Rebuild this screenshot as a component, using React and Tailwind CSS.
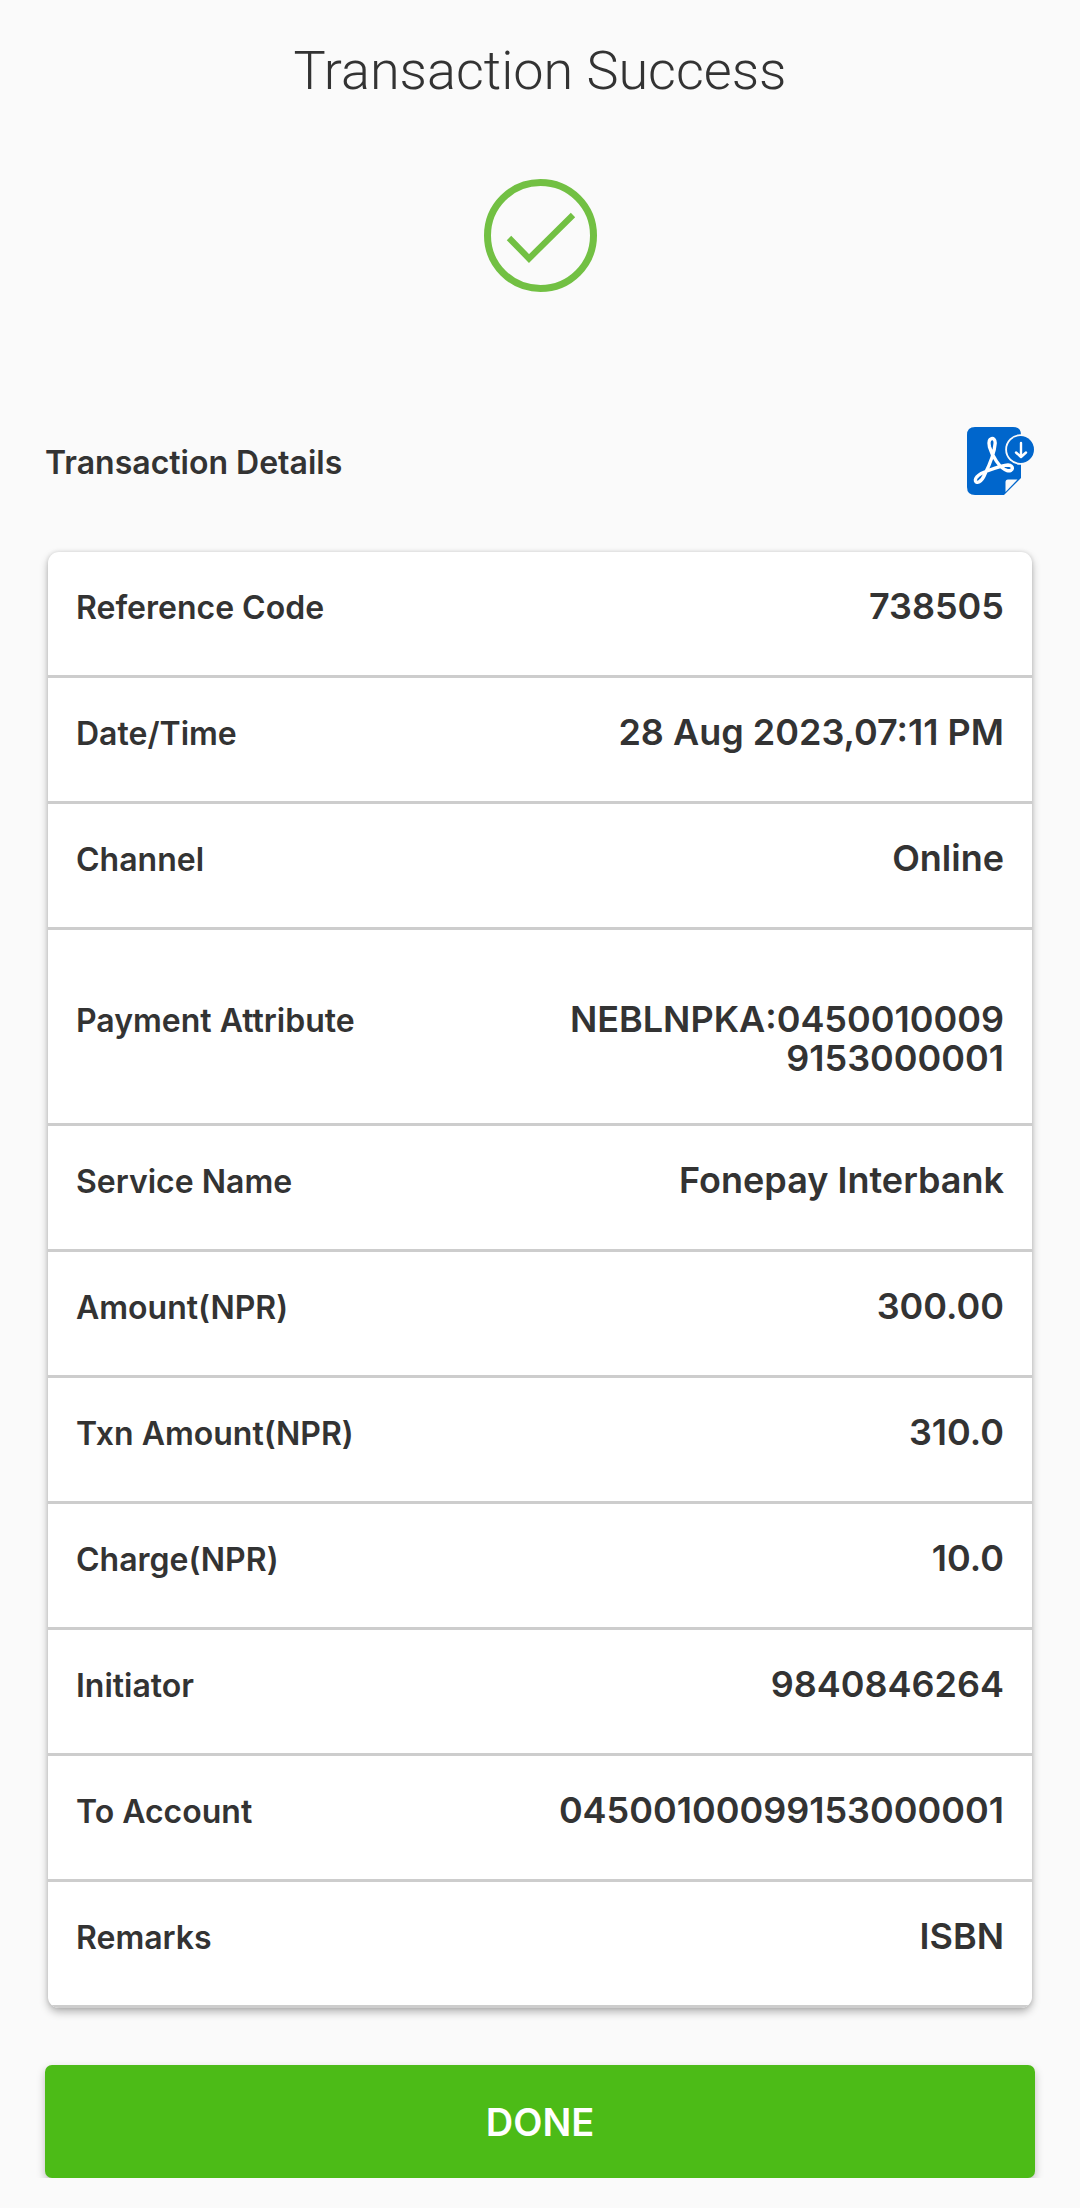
const details = [
  { label: 'Reference Code', value: '738505' },
  { label: 'Date/Time', value: '28 Aug 2023,07:11 PM' },
  { label: 'Channel', value: 'Online' },
  { label: 'Payment Attribute', value: 'NEBLNPKA:04500100099153000001', tall: true },
  { label: 'Service Name', value: 'Fonepay Interbank' },
  { label: 'Amount(NPR)', value: '300.00' },
  { label: 'Txn Amount(NPR)', value: '310.0' },
  { label: 'Charge(NPR)', value: '10.0' },
  { label: 'Initiator', value: '9840846264' },
  { label: 'To Account', value: '04500100099153000001' },
  { label: 'Remarks', value: 'ISBN' },
]

function SuccessIcon() {
  return (
    <svg viewBox="0 0 113 113" className="w-[113px] h-[113px]" fill="none" stroke="#72c043" aria-hidden="true">
      <circle cx="56.5" cy="56.5" r="53" strokeWidth="7" />
      <path d="M25 59 L45 79.5 L89 36" strokeWidth="6.2" />
    </svg>
  )
}

function PdfIcon() {
  return (
    <svg viewBox="0 0 68 68" className="w-[68px] h-[68px]" aria-hidden="true">
      <path d="M8 0H46Q54 0 54 8V51L37 68H8Q0 68 0 60V8Q0 0 8 0Z" fill="#0066cc" />
      <path d="M38.5 65V55Q38.5 52.5 41 52.5H50.5Z" fill="#fafafa" />
      {/* acrobat swirl */}
      <path
        d="M22.5 20C20 9.5 28.5 9.5 28.2 16C27.5 26 22.5 38 17.5 48C14.5 55 9.5 57 8.5 54C7.5 50 14 46 20 44C28 41 36 38 41 38C47.5 38.5 46.5 45 40 43.5C33 41.5 25 29 22.5 20Z"
        fill="none" stroke="#fff" strokeWidth="3.4" strokeLinejoin="round"
      />
      <circle cx="53.5" cy="22.5" r="15.3" fill="#fafafa" />
      <circle cx="53.5" cy="22.5" r="13.5" fill="#0066cc" />
      <path d="M54 16V29.5M49 25.5L54 30L59 25.5" fill="none" stroke="#fff" strokeWidth="2.4" strokeLinecap="round" strokeLinejoin="round" />
    </svg>
  )
}

function DetailRow({ label, value, tall }) {
  return (
    <div className={`flex items-baseline justify-between gap-6 px-7 border-b-3 border-[#cdcdcd] ${tall ? 'pt-[70px] pb-[45px]' : 'pt-[35px] pb-[49px]'}`}>
      <dt className="text-[32px] leading-[34px]">{label}</dt>
      <dd className="max-w-[452px] text-right text-[36px] leading-[39px] break-all">{value}</dd>
    </div>
  )
}

export default function App() {
  return (
    <div className="min-h-screen bg-[#fafafa] text-[#333333] font-semibold font-['Inter','Liberation_Sans',sans-serif]">
      <main className="flex flex-col px-[45px] pt-[39px] pb-[30px]">
        <h1 className="text-center text-[54px] leading-[64px] font-light font-['Roboto','Liberation_Sans',sans-serif]">
          Transaction Success
        </h1>
        <div className="flex justify-center mt-[76px]">
          <SuccessIcon />
        </div>

        <div className="flex items-center justify-between mt-[135px]">
          <h2 className="pt-1 text-[32px] leading-[40px]">Transaction Details</h2>
          <button type="button" aria-label="Download PDF" className="cursor-pointer">
            <PdfIcon />
          </button>
        </div>

        <dl className="mt-[57px] mx-[3px] bg-white rounded-[11px] overflow-hidden shadow-[0_4px_8px_rgba(0,0,0,0.28),0_0_4px_rgba(0,0,0,0.12)]">
          {details.map((item) => (
            <DetailRow key={item.label} {...item} />
          ))}
        </dl>

        {/* clip the button shadow at its lower edge */}
        <div className="mt-[47px] -mx-4 px-4 pt-[10px] overflow-hidden">
          <button
            type="button"
            className="block w-full h-[113px] rounded-[7px] bg-[#4cbb17] text-white text-[38px] leading-[40px] cursor-pointer shadow-[0_4px_8px_rgba(0,0,0,0.25)]"
          >
            DONE
          </button>
        </div>
      </main>
    </div>
  )
}
